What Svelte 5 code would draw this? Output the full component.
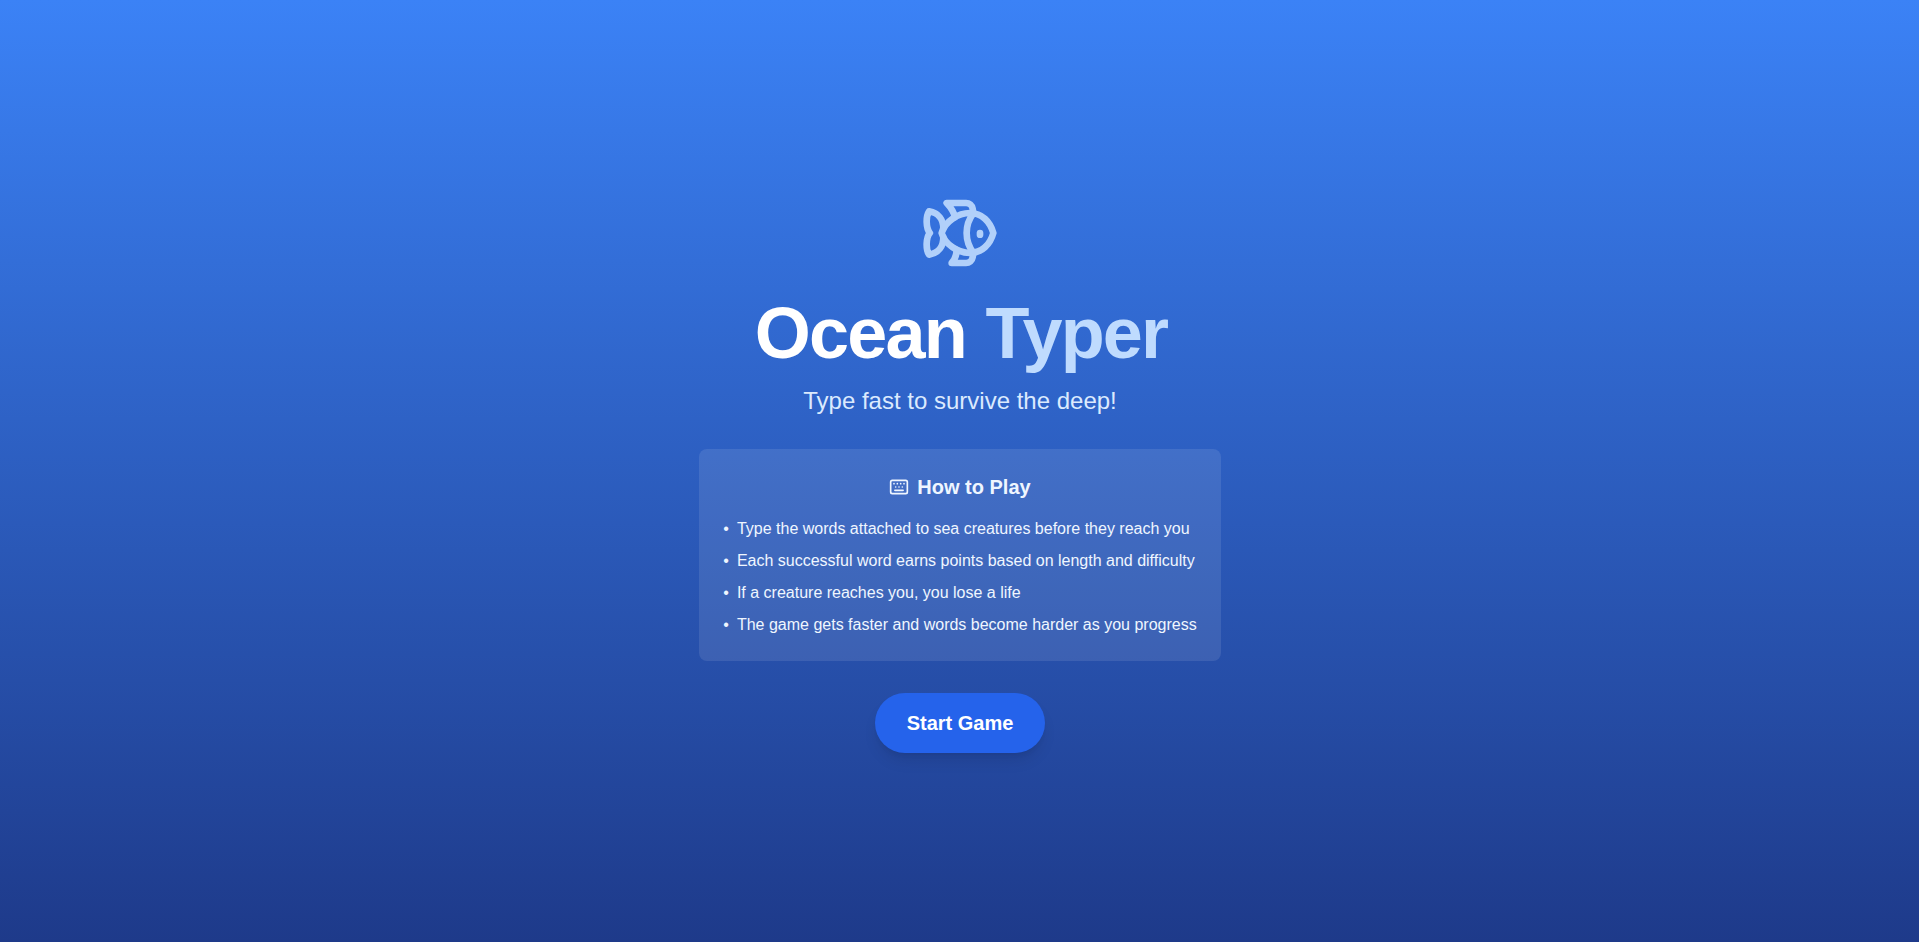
<script lang="ts">
	const title = ['Ocean', 'Typer'];

	const rules: string[] = [
		'Type the words attached to sea creatures before they reach you',
		'Each successful word earns points based on length and difficulty',
		'If a creature reaches you, you lose a life',
		'The game gets faster and words become harder as you progress'
	];
</script>

<main class="screen">
	<div class="intro">
		<svg class="icon fish" viewBox="0 0 24 24" aria-hidden="true">
			<path
				d="M6.5 12c.94-3.46 4.94-6 8.5-6 3.56 0 6.06 2.54 7 6-.94 3.47-3.44 6-7 6s-7.56-2.53-8.5-6Z"
			/>
			<path d="M18 12v.5" />
			<path d="M16 17.93a9.77 9.77 0 0 1 0-11.86" />
			<path
				d="M7 10.67C7 8 5.58 5.97 2.73 5.5c-1 1.5-1 5 .23 6.5-1.24 1.5-1.24 5-.23 6.5C5.58 18.03 7 16 7 13.33"
			/>
			<path d="M10.46 7.26C10.2 5.88 9.17 4.24 8 3h5.8a2 2 0 0 1 1.98 1.67l.23 1.4" />
			<path d="m16.01 17.93-.23 1.4A2 2 0 0 1 13.8 21H9.5a5.96 5.96 0 0 0 1.49-3.98" />
		</svg>

		<h1>{title[0]} <span>{title[1]}</span></h1>
		<p class="tagline">Type fast to survive the deep!</p>

		<section class="card">
			<h2>
				<svg class="icon keyboard" viewBox="0 0 24 24" aria-hidden="true">
					<rect width="20" height="16" x="2" y="4" rx="2" />
					<path d="M6 8h.01M10 8h.01M14 8h.01M18 8h.01M8 12h.01M12 12h.01M16 12h.01M7 16h10" />
				</svg>
				How to Play
			</h2>
			<ul>
				{#each rules as rule}
					<li><span class="bullet">•</span>{rule}</li>
				{/each}
			</ul>
		</section>

		<button type="button">Start Game</button>
	</div>
</main>

<style>
	:global(body) {
		margin: 0;
	}

	.screen {
		display: flex;
		align-items: center;
		justify-content: center;
		box-sizing: border-box;
		height: 100vh;
		padding: 4px 0 0 1px;
		overflow: hidden;
		background: linear-gradient(to bottom, #3b82f6, #1e3a8a);
		color: #fff;
		font-family: 'Liberation Sans', Arial, sans-serif;
		font-size: 16px;
		line-height: 24px;
	}

	.intro {
		display: flex;
		flex-direction: column;
		align-items: center;
	}

	.icon {
		fill: none;
		stroke: currentColor;
		stroke-width: 2;
		stroke-linecap: round;
		stroke-linejoin: round;
	}

	.fish {
		width: 80px;
		height: 80px;
		margin-bottom: 24px;
		color: #bfdbfe;
		opacity: 0.9;
	}

	h1 {
		margin: 0 0 16px;
		padding-left: 2px;
		font-size: 72px;
		font-weight: 700;
		line-height: 1;
		letter-spacing: -0.025em;
		word-spacing: 1.5px;
	}

	h1 span {
		color: #bfdbfe;
	}

	.tagline {
		margin: 0 0 32px;
		color: #dbeafe;
		font-size: 24px;
		line-height: 32px;
	}

	.card {
		margin-bottom: 32px;
		padding: 24px;
		border-radius: 8px;
		background: rgba(255, 255, 255, 0.1);
		color: #eff6ff;
	}

	h2 {
		display: flex;
		align-items: center;
		justify-content: center;
		gap: 8px;
		margin: 0 0 16px;
		font-size: 20px;
		font-weight: 700;
		line-height: 28px;
	}

	.keyboard {
		width: 20px;
		height: 20px;
	}

	ul {
		display: flex;
		flex-direction: column;
		gap: 8px;
		margin: 0;
		padding: 0;
		list-style: none;
	}

	li {
		display: flex;
	}

	.bullet {
		margin-right: 8px;
	}

	button {
		padding: 16px 32px;
		border: none;
		border-radius: 9999px;
		background: #2563eb;
		box-shadow:
			0 10px 15px -3px rgba(0, 0, 0, 0.1),
			0 4px 6px -4px rgba(0, 0, 0, 0.1);
		color: #fff;
		font-family: inherit;
		font-size: 20px;
		font-weight: 700;
		line-height: 28px;
		cursor: pointer;
	}

	button:hover {
		background: #3b82f6;
	}
</style>
